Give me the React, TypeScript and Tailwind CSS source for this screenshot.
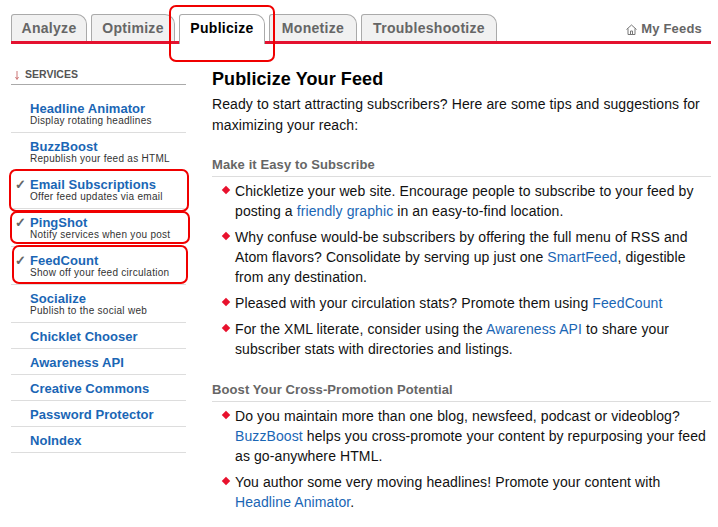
const tabs = [
  { name: "Analyze", width: "w-[76px]" },
  { name: "Optimize", width: "w-[84px]" },
  { name: "Publicize", width: "w-[86px]" },
  { name: "Monetize", width: "w-[88px]" },
  { name: "Troubleshootize", width: "w-[136px]" },
];

const services = [
  { name: "Headline Animator", desc: "Display rotating headlines" },
  { name: "BuzzBoost", desc: "Republish your feed as HTML" },
  { name: "Email Subscriptions", desc: "Offer feed updates via email", on: true },
  { name: "PingShot", desc: "Notify services when you post", on: true },
  { name: "FeedCount", desc: "Show off your feed circulation", on: true },
  { name: "Socialize", desc: "Publish to the social web" },
  { name: "Chicklet Chooser" },
  { name: "Awareness API" },
  { name: "Creative Commons" },
  { name: "Password Protector" },
  { name: "NoIndex" },
];

function A({ children }: { children: React.ReactNode }) {
  return <a className="text-[#1a66b5]">{children}</a>;
}

function Tip({ children }: { children: React.ReactNode }) {
  return (
    <li className="relative pl-[23px] mb-[6px]">
      <span className="absolute left-[11px] top-[6px] w-[6px] h-[6px] bg-[#e8112d] rotate-45" />
      {children}
    </li>
  );
}

function SectionTitle({ children }: { children: React.ReactNode }) {
  return (
    <h3 className="text-[13px] font-bold text-[#666] leading-[16px] pb-[3px] border-b border-[#ddd]">
      {children}
    </h3>
  );
}

export default function App() {
  return (
    <div className="relative w-[718px] h-[527px] overflow-hidden bg-white font-['Liberation_Sans',Arial,sans-serif] text-[14px] text-[#111] tracking-[0.1px]">
      {/* tabs */}
      <div className="ml-[11px] mr-[7px] pt-[14px] h-[44px] border-b-[3px] border-[#e4112f] flex items-end justify-between">
        <div className="flex gap-[4px]">
          {tabs.map((t) =>
            t.name === "Publicize" ? (
              <div key={t.name} className={`${t.width} h-[30px] -mb-[3px] text-center bg-white border border-b-0 border-[#aaa] rounded-tr-[10px] rounded-tl-[3px] text-[14px] font-bold text-black tracking-[0.3px] leading-[27px]`}>
                {t.name}
              </div>
            ) : (
              <div key={t.name} className={`${t.width} h-[27px] text-center bg-[#f1f1f1] border border-b-0 border-[#aaa] rounded-tr-[10px] rounded-tl-[3px] text-[14px] font-bold text-[#666] tracking-[0.3px] leading-[27px]`}>
                {t.name}
              </div>
            )
          )}
        </div>
        <div className="flex items-center gap-[4px] pr-[9px] pb-[2px] text-[13px] font-bold text-[#666] leading-[20px] tracking-[0.2px]">
          <svg width="11" height="11" viewBox="0 0 11 11" fill="none" stroke="#777" strokeWidth="1">
            <path d="M0.5 5.5 L5.5 1 L10.5 5.5" />
            <path d="M2 4.5 V10.5 H9 V4.5" />
            <path d="M4.5 10.5 V7 H6.5 V10.5" />
          </svg>
          My Feeds
        </div>
      </div>

      <div className="flex ml-[11px] mr-[7px] mt-[22px]">
        {/* sidebar */}
        <div className="w-[175px] shrink-0">
          <div className="h-[19px] flex items-start text-[10.5px] font-bold text-[#555] leading-[16px] border-b border-[#aaa] tracking-normal">
            <svg className="ml-[4px] mr-[6px] mt-[5px]" width="4" height="9" viewBox="0 0 4 9" fill="none" stroke="#c77" strokeWidth="1">
              <path d="M2 0 V8 M0.5 6 L2 8.5 L3.5 6" />
            </svg>
            SERVICES
          </div>
          <div className="mt-[10px]">
            {services.map((s) => (
              <div key={s.name} className={`relative border-b border-[#ddd] pl-[19px] ${s.desc ? "h-[38px] pt-[6px]" : "h-[26px] pt-[6px]"}`}>
                {s.on && <span className="absolute left-[4px] top-[4px] text-[13px] font-bold text-[#666]">✓</span>}
                <div className="text-[13px] font-bold text-[#1a66b5] leading-[15px] tracking-[0.05px]">{s.name}</div>
                {s.desc && <div className="-mt-[1px] text-[10px] text-[#333] leading-[11px] tracking-[0.28px]">{s.desc}</div>}
              </div>
            ))}
          </div>
        </div>

        {/* main */}
        <div className="ml-[26px] flex-1 min-w-0">
          <h1 className="text-[18px] font-bold text-black leading-[24px] mt-[1px]">Publicize Your Feed</h1>
          <p className="mt-[3px] leading-[21px]">
            Ready to start attracting subscribers? Here are some tips and suggestions for maximizing your reach:
          </p>
          <div className="mt-[21px]">
            <SectionTitle>Make it Easy to Subscribe</SectionTitle>
          </div>
          <ul className="mt-[4px] leading-[20px]">
            <Tip>
              Chickletize your web site. Encourage people to subscribe to your feed by posting a <A>friendly graphic</A> in an easy-to-find location.
            </Tip>
            <Tip>
              Why confuse would-be subscribers by offering the full menu of RSS and Atom flavors? Consolidate by serving up just one <A>SmartFeed</A>, digestible from any destination.
            </Tip>
            <Tip>
              Pleased with your circulation stats? Promote them using <A>FeedCount</A>
            </Tip>
            <Tip>
              For the XML literate, consider using the <A>Awareness API</A> to share your subscriber stats with directories and listings.
            </Tip>
          </ul>
          <div className="mt-[23px]">
            <SectionTitle>Boost Your Cross-Promotion Potential</SectionTitle>
          </div>
          <ul className="mt-[4px] leading-[20px]">
            <Tip>
              Do you maintain more than one blog, newsfeed, podcast or videoblog? <A>BuzzBoost</A> helps you cross-promote your content by repurposing your feed as go-anywhere HTML.
            </Tip>
            <Tip>
              You author some very moving headlines! Promote your content with <A>Headline Animator</A>.
            </Tip>
          </ul>
        </div>
      </div>

      {/* red annotation boxes */}
      <div className="absolute left-[169px] top-[5px] w-[106px] h-[57px] border-2 border-[#f00000] rounded-[7px]" />
      <div className="absolute left-[9px] top-[169px] w-[180px] h-[43px] border-2 border-[#f00000] rounded-[7px]" />
      <div className="absolute left-[10px] top-[211px] w-[180px] h-[33px] border-2 border-[#f00000] rounded-[7px]" />
      <div className="absolute left-[12px] top-[245px] w-[176px] h-[39px] border-2 border-[#f00000] rounded-[7px]" />
    </div>
  );
}
